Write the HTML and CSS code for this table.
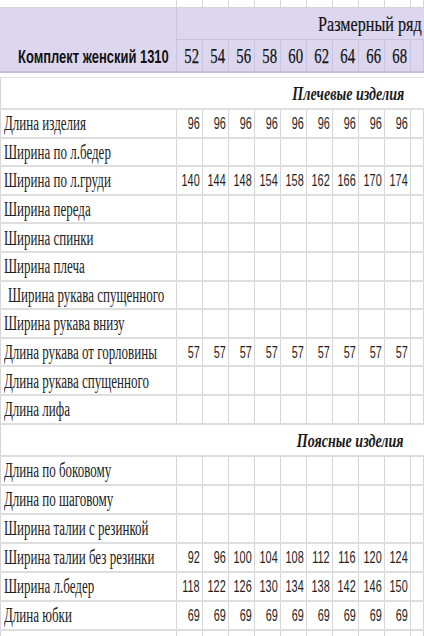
FILE: index.html
```html
<!DOCTYPE html>
<html lang="ru">
<head>
<meta charset="utf-8">
<title>Комплект женский 1310</title>
<link rel="stylesheet" href="styles.css">
</head>
<body>
<div class="sheet">
  <div class="strip"><span></span><span></span><span></span><span></span><span></span><span></span><span></span><span></span><span></span><span></span><span></span></div>

  <div class="head">
    <div class="h-label"><em>Комплект женский 1310</em></div>
    <div class="h-title"><em>Размерный ряд</em></div>
    <div class="h-size"><em>52</em></div>
    <div class="h-size"><em>54</em></div>
    <div class="h-size"><em>56</em></div>
    <div class="h-size"><em>58</em></div>
    <div class="h-size"><em>60</em></div>
    <div class="h-size"><em>62</em></div>
    <div class="h-size"><em>64</em></div>
    <div class="h-size"><em>66</em></div>
    <div class="h-size"><em>68</em></div>
    <div class="h-size"></div>
  </div>

  <div class="gap"></div>

  <div class="sec"><em>Плечевые изделия</em></div>

  <div class="row"><span class="lbl"><em>Длина изделия</em></span><span class="num"><em>96</em></span><span class="num"><em>96</em></span><span class="num"><em>96</em></span><span class="num"><em>96</em></span><span class="num"><em>96</em></span><span class="num"><em>96</em></span><span class="num"><em>96</em></span><span class="num"><em>96</em></span><span class="num"><em>96</em></span><span></span></div>
  <div class="row"><span class="lbl"><em>Ширина по л.бедер</em></span><span></span><span></span><span></span><span></span><span></span><span></span><span></span><span></span><span></span><span></span></div>
  <div class="row"><span class="lbl"><em>Ширина по л.груди</em></span><span class="num"><em>140</em></span><span class="num"><em>144</em></span><span class="num"><em>148</em></span><span class="num"><em>154</em></span><span class="num"><em>158</em></span><span class="num"><em>162</em></span><span class="num"><em>166</em></span><span class="num"><em>170</em></span><span class="num"><em>174</em></span><span></span></div>
  <div class="row"><span class="lbl"><em>Ширина переда</em></span><span></span><span></span><span></span><span></span><span></span><span></span><span></span><span></span><span></span><span></span></div>
  <div class="row"><span class="lbl"><em>Ширина спинки</em></span><span></span><span></span><span></span><span></span><span></span><span></span><span></span><span></span><span></span><span></span></div>
  <div class="row"><span class="lbl"><em>Ширина плеча</em></span><span></span><span></span><span></span><span></span><span></span><span></span><span></span><span></span><span></span><span></span></div>
  <div class="row"><span class="lbl lbl-indent"><em>Ширина рукава спущенного</em></span><span></span><span></span><span></span><span></span><span></span><span></span><span></span><span></span><span></span><span></span></div>
  <div class="row"><span class="lbl"><em>Ширина рукава внизу</em></span><span></span><span></span><span></span><span></span><span></span><span></span><span></span><span></span><span></span><span></span></div>
  <div class="row"><span class="lbl"><em>Длина рукава от горловины</em></span><span class="num"><em>57</em></span><span class="num"><em>57</em></span><span class="num"><em>57</em></span><span class="num"><em>57</em></span><span class="num"><em>57</em></span><span class="num"><em>57</em></span><span class="num"><em>57</em></span><span class="num"><em>57</em></span><span class="num"><em>57</em></span><span></span></div>
  <div class="row"><span class="lbl"><em>Длина рукава спущенного</em></span><span></span><span></span><span></span><span></span><span></span><span></span><span></span><span></span><span></span><span></span></div>
  <div class="row"><span class="lbl"><em>Длина лифа</em></span><span></span><span></span><span></span><span></span><span></span><span></span><span></span><span></span><span></span><span></span></div>

  <div class="sec sec-2"><em>Поясные изделия</em></div>

  <div class="row row-b"><span class="lbl"><em>Длина по боковому</em></span><span></span><span></span><span></span><span></span><span></span><span></span><span></span><span></span><span></span><span></span></div>
  <div class="row row-b"><span class="lbl"><em>Длина по шаговому</em></span><span></span><span></span><span></span><span></span><span></span><span></span><span></span><span></span><span></span><span></span></div>
  <div class="row row-b"><span class="lbl"><em>Ширина талии с резинкой</em></span><span></span><span></span><span></span><span></span><span></span><span></span><span></span><span></span><span></span><span></span></div>
  <div class="row row-b"><span class="lbl"><em>Ширина талии без резинки</em></span><span class="num"><em>92</em></span><span class="num"><em>96</em></span><span class="num"><em>100</em></span><span class="num"><em>104</em></span><span class="num"><em>108</em></span><span class="num"><em>112</em></span><span class="num"><em>116</em></span><span class="num"><em>120</em></span><span class="num"><em>124</em></span><span></span></div>
  <div class="row row-b"><span class="lbl"><em>Ширина л.бедер</em></span><span class="num"><em>118</em></span><span class="num"><em>122</em></span><span class="num"><em>126</em></span><span class="num"><em>130</em></span><span class="num"><em>134</em></span><span class="num"><em>138</em></span><span class="num"><em>142</em></span><span class="num"><em>146</em></span><span class="num"><em>150</em></span><span></span></div>
  <div class="row row-b"><span class="lbl"><em>Длина юбки</em></span><span class="num"><em>69</em></span><span class="num"><em>69</em></span><span class="num"><em>69</em></span><span class="num"><em>69</em></span><span class="num"><em>69</em></span><span class="num"><em>69</em></span><span class="num"><em>69</em></span><span class="num"><em>69</em></span><span class="num"><em>69</em></span><span></span></div>
  <div class="row row-b"><span class="lbl"></span><span></span><span></span><span></span><span></span><span></span><span></span><span></span><span></span><span></span><span></span></div>
</div>
</body>
</html>
```
FILE: styles.css
```css
* {
  box-sizing: border-box;
  margin: 0;
  padding: 0;
}

html, body {
  background: #ffffff;
  overflow: hidden;
}

body {
  width: 424px;
  height: 636px;
  font-family: "Liberation Serif", "Times New Roman", serif;
  color: #1e1e1e;
}

.sheet {
  width: 424px;
}

em {
  font-style: normal;
  display: inline-block;
  white-space: nowrap;
  transform: scaleX(0.65);
  transform-origin: left center;
}

/* top partial row */
.strip {
  display: grid;
  grid-template-columns: 177px repeat(9, 26px) 1fr;
  height: 8px;
  border-bottom: 1px solid #d4d4d4;
}
.strip > span {
  border-right: 1px solid #d8d8d8;
}

/* lavender header */
.head {
  display: grid;
  grid-template-columns: 177px repeat(9, 26px) 1fr;
  grid-template-rows: 32px 31px;
  height: 65px;
  background: #dcd7ee;
  border-bottom: 2px solid #c6c0da;
  overflow: hidden;
}
.h-label {
  grid-row: 1 / 3;
  grid-column: 1;
  border-right: 1px solid #c9c3de;
  display: flex;
  align-items: center;
  padding-top: 34px;
  padding-left: 18px;
  font-family: "Liberation Sans", Arial, sans-serif;
  font-weight: bold;
  font-size: 18.5px;
  color: #121212;
}
.h-label em {
  transform: scaleX(0.7);
}
.h-title {
  grid-row: 1;
  grid-column: 2 / -1;
  border-bottom: 1px solid #c9c3de;
  display: flex;
  align-items: center;
  padding-left: 141px;
  padding-top: 1px;
  font-size: 21px;
  color: #121212;
  -webkit-text-stroke: 0.2px #121212;
}
.h-title em {
  transform: scaleX(0.77);
}
.h-size {
  grid-row: 2;
  border-right: 1px solid #c9c3de;
  display: flex;
  align-items: center;
  justify-content: flex-end;
  padding-right: 3px;
  padding-top: 1px;
  font-size: 21px;
  color: #121212;
  -webkit-text-stroke: 0.25px #121212;
}
.h-size em {
  transform: scaleX(0.7);
  transform-origin: right center;
}

.gap {
  height: 5px;
  border-bottom: 1px solid #e0e0e0;
}

/* section titles */
.sec {
  height: 32px;
  display: flex;
  align-items: center;
  justify-content: flex-end;
  padding-right: 20px;
  padding-top: 3px;
  border-bottom: 2px solid #dedede;
  box-shadow: inset 1px 0 #d6d6d6;
  font-size: 18.5px;
  font-style: italic;
  font-weight: bold;
  color: #1a1a1a;
}
.sec em {
  font-style: italic;
  transform: scaleX(0.76);
  transform-origin: right center;
}
.sec-2 {
  height: 32.4px;
}

/* data rows */
.row {
  display: grid;
  grid-template-columns: 177px repeat(9, 26px) 1fr;
  height: 28.6px;
  border-bottom: 2px solid #dedede;
}
.row-b {
  height: 29px;
}
.row > span {
  border-right: 1px solid #d6d6d6;
  display: flex;
  align-items: center;
}
.lbl {
  padding-left: 4px;
  padding-top: 1px;
  font-size: 20px;
  color: #222222;
  box-shadow: inset 1px 0 #d6d6d6;
}
.lbl-indent {
  padding-left: 8px;
}
.num {
  justify-content: flex-end;
  padding-right: 2px;
  padding-top: 1px;
  font-family: "Liberation Sans", Arial, sans-serif;
  font-size: 16px;
  color: #1e1e1e;
}
.num em {
  transform: scaleX(0.68);
  transform-origin: right center;
}
```
